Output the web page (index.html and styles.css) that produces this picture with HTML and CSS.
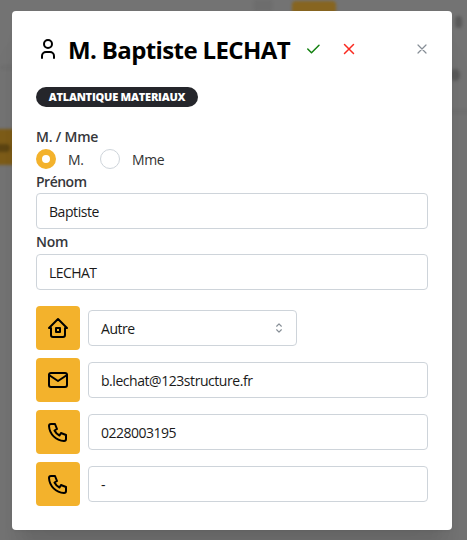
FILE: index.html
```html
<!DOCTYPE html>
<html lang="fr">
<head>
<meta charset="utf-8">
<title>Contact</title>
<link rel="stylesheet" href="styles.css">
</head>
<body>
<div class="backdrop" aria-hidden="true">
  <i class="line line-top"></i><i class="line line-left"></i><i class="line line-right"></i>
  <i class="block block-top"></i><i class="block block-left"></i>
  <i class="smudge smudge-a"></i><i class="smudge smudge-b"></i><i class="smudge smudge-c"></i>
</div>
<main class="modal">
  <header class="header">
    <svg class="user" viewBox="0 0 24 24"><circle cx="12" cy="7" r="4"/><path d="M6 21v-2a4 4 0 0 1 4-4h4a4 4 0 0 1 4 4v2"/></svg>
    <h1 class="title"><span>M. Baptiste LECHAT</span></h1>
    <svg class="check" viewBox="0 0 24 24"><path d="M5 12l5 5L20 7"/></svg>
    <svg class="cancel" viewBox="0 0 24 24"><path d="M18 6L6 18M6 6l12 12"/></svg>
    <svg class="close" viewBox="0 0 24 24"><path d="M18 6L6 18M6 6l12 12"/></svg>
  </header>
  <div class="badge"><span>ATLANTIQUE MATERIAUX</span></div>
  <form class="form">
    <div class="label label-civility">M. / Mme</div>
    <div class="radios">
      <i class="radio radio-on"></i><span class="radio-text text-m">M.</span>
      <i class="radio"></i><span class="radio-text">Mme</span>
    </div>
    <div class="label label-first">Prénom</div>
    <div class="input"><span class="v-first">Baptiste</span></div>
    <div class="label label-last">Nom</div>
    <div class="input"><span class="v-last">LECHAT</span></div>
    <div class="rows">
      <div class="row">
        <div class="tile"><svg viewBox="0 0 24 24"><path d="M5 12H3l9-9 9 9h-2v7a2 2 0 0 1-2 2H7a2 2 0 0 1-2-2v-7"/><path d="M10 12h4v4h-4z"/></svg></div>
        <div class="input select"><span class="v-type">Autre</span><svg class="chevrons" viewBox="0 0 24 24"><path d="M8 9l4-4 4 4M16 15l-4 4-4-4"/></svg></div>
      </div>
      <div class="row">
        <div class="tile"><svg viewBox="0 0 24 24"><rect x="3" y="5" width="18" height="14" rx="2"/><path d="M3 7l9 6 9-6"/></svg></div>
        <div class="input"><span class="v-mail">b.lechat@123structure.fr</span></div>
      </div>
      <div class="row">
        <div class="tile"><svg viewBox="0 0 24 24"><path d="M5 4h4l2 5-2.500 1.500a11 11 0 0 0 5 5L15 13l5 2v4a2 2 0 0 1-2 2A16 16 0 0 1 3 6a2 2 0 0 1 2-2"/></svg></div>
        <div class="input"><span class="v-phone">0228003195</span></div>
      </div>
      <div class="row">
        <div class="tile"><svg viewBox="0 0 24 24"><path d="M5 4h4l2 5-2.500 1.500a11 11 0 0 0 5 5L15 13l5 2v4a2 2 0 0 1-2 2A16 16 0 0 1 3 6a2 2 0 0 1 2-2"/></svg></div>
        <div class="input"><span class="v-empty">-</span></div>
      </div>
    </div>
  </form>
</main>
</body>
</html>
```
FILE: styles.css
```css
* { box-sizing: border-box; }
body {
  margin: 0;
  height: 540px;
  overflow: hidden;
  background: #737373;
  color: #000;
  font-family: "Open Sans", "Noto Sans", sans-serif;
  font-size: 14px;
}
svg {
  display: block;
  flex: none;
  fill: none;
  stroke: currentColor;
  stroke-width: 2;
  stroke-linecap: round;
  stroke-linejoin: round;
}
span { white-space: nowrap; }

/* Dimmed page behind the dialog */
.backdrop { position: absolute; inset: 0; overflow: hidden; }
.backdrop i { position: absolute; filter: blur(1.500px); }
.block { background: #7d5c18; }
.block-top { left: 292px; top: 1px; width: 44px; height: 44px; border-radius: 4px; background: #876520; }
.block-left { left: -6px; top: 129px; width: 40px; height: 36px; }
.line { background: #6d6d6d; }
.line-top { left: 254px; top: 0; width: 18px; height: 11px; }
.line-left { left: 0; top: 66px; width: 20px; height: 3px; }
.line-right { left: 448px; top: 110px; width: 30px; height: 3px; }
.smudge { background: #5a5a5a; border-radius: 5px; }
.smudge-a { left: 455px; top: 16px; width: 7px; height: 12px; }
.smudge-b { left: 450px; top: 69px; width: 10px; height: 12px; }
.smudge-c { left: -4px; top: 144px; width: 14px; height: 8px; background: #5c4412; }

.modal {
  position: relative;
  width: 440px;
  height: 519px;
  margin: 11px 0 0 12px;
  padding: 24px;
  background: #fff;
  border-radius: 4px;
  box-shadow: 0 1px 3px rgba(0,0,0,.05), 0 36px 28px -7px rgba(0,0,0,.07), 0 17px 17px -7px rgba(0,0,0,.05);
}
.header { display: flex; align-items: center; height: 28px; }
.user { width: 24px; height: 24px; }
.title {
  width: 222px;
  margin: 0 0 0 8px;
  padding-top: 2px;
  font-size: 24px;
  font-weight: 700;
  line-height: 28px;
  letter-spacing: -.62px;
}
.check, .cancel { width: 18px; height: 18px; stroke-width: 2; }
.check { margin-left: 14px; color: #12800f; }
.cancel { margin-left: 18px; color: #fa2a20; }
.close { width: 16px; height: 16px; margin-left: auto; margin-right: -2px; color: #868e96; stroke-width: 1.800; }

.badge {
  display: flex;
  align-items: center;
  justify-content: center;
  width: 162px;
  height: 20px;
  margin-top: 24px;
  padding-bottom: 1px;
  border-radius: 10px;
  background: #25262b;
  color: #fff;
  font-size: 11px;
  font-weight: 800;
  letter-spacing: -.22px;
}
.form { margin-top: 19px; }
.label { height: 22px; line-height: 22px; font-weight: 600; letter-spacing: -.2px; color: #36373b; }
.radios { display: flex; align-items: center; height: 20px; margin-top: 1px; }
.radio { width: 20px; height: 20px; border: 1px solid #ced4da; border-radius: 50%; }
.radio-on { border: 6px solid #f3b22c; }
.radio-text { margin-left: 12px; letter-spacing: -.4px; color: #333; }
.text-m { width: 32px; }
.label-first { margin-top: 2px; letter-spacing: -.5px; }
.label-last { margin-top: 2px; }
.input {
  display: flex;
  align-items: center;
  flex: 1;
  height: 36px;
  padding: 0 12px;
  border: 1px solid #ced4da;
  border-radius: 4px;
  background: #fff;
  color: #1a1a1a;
}
.label-last + .input { margin-top: 1px; }
.v-first { letter-spacing: -.43px; }
.v-last { letter-spacing: -.55px; }
.v-type { letter-spacing: -.45px; }
.v-mail { letter-spacing: -.45px; }
.v-phone { letter-spacing: -.5px; }
.rows { display: grid; gap: 8px; margin-top: 16px; }
.row { display: flex; align-items: center; gap: 8px; height: 44px; }
.tile { display: grid; place-items: center; flex: none; width: 44px; height: 44px; border-radius: 4px; background: #f3b22c; }
.tile svg { width: 24px; height: 24px; }
.select { flex: none; width: 209px; justify-content: space-between; }
.chevrons { width: 14px; height: 14px; margin-right: -2px; color: #868e96; }
```
